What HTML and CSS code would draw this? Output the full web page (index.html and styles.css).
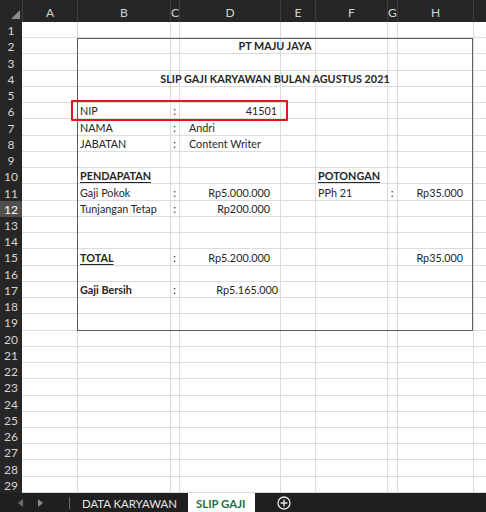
FILE: index.html
```html
<!DOCTYPE html>
<html lang="id">
<head>
<meta charset="utf-8">
<title>SLIP GAJI</title>
<link rel="stylesheet" href="styles.css">
</head>
<body>
<div class="app">
  <div class="colheads">
    <div class="corner"><span class="tri"></span></div>
    <div class="ch">A</div><div class="ch">B</div><div class="ch">C</div><div class="ch">D</div><div class="ch">E</div><div class="ch">F</div><div class="ch">G</div><div class="ch">H</div><div class="ch"></div>
  </div>
  <div class="main">
    <div class="rownums">
      <div>1</div><div>2</div><div>3</div><div>4</div><div>5</div><div>6</div><div>7</div><div>8</div><div>9</div><div>10</div>
      <div>11</div><div class="sel">12</div><div>13</div><div>14</div><div>15</div><div>16</div><div>17</div><div>18</div><div>19</div><div>20</div>
      <div>21</div><div>22</div><div>23</div><div>24</div><div>25</div><div>26</div><div>27</div><div>28</div><div>29</div>
    </div>
    <div class="cells">
      <div class="box"></div>
      <div class="cell title r2">PT MAJU JAYA</div>
      <div class="cell title r4">SLIP GAJI KARYAWAN BULAN AGUSTUS 2021</div>

      <div class="cell cb r6">NIP</div><div class="cell cc r6">:</div><div class="cell cd num-nip r6">41501</div>
      <div class="highlight"></div>
      <div class="cell cb r7">NAMA</div><div class="cell cc r7">:</div><div class="cell cd txt r7">Andri</div>
      <div class="cell cb r8">JABATAN</div><div class="cell cc r8">:</div><div class="cell cd txt r8">Content Writer</div>

      <div class="cell cb r10 head">PENDAPATAN</div><div class="cell cf r10 head">POTONGAN</div>
      <div class="cell cb r11">Gaji Pokok</div><div class="cell cc r11">:</div><div class="cell cd num r11">Rp5.000.000</div>
      <div class="cell cf r11">PPh 21</div><div class="cell cg r11">:</div><div class="cell ch2 num r11">Rp35.000</div>
      <div class="cell cb r12">Tunjangan Tetap</div><div class="cell cc r12">:</div><div class="cell cd num r12">Rp200.000</div>

      <div class="cell cb r15 head">TOTAL</div><div class="cell cc r15">:</div><div class="cell cd num r15">Rp5.200.000</div>
      <div class="cell ch2 num r15">Rp35.000</div>
      <div class="cell cb r17 strong">Gaji Bersih</div><div class="cell cc r17">:</div><div class="cell cd num-net r17">Rp5.165.000</div>
    </div>
  </div>
  <div class="tabbar">
    <div class="nav">
      <svg width="6" height="8" viewBox="0 0 6 8"><path d="M5 0 L0 4 L5 8 Z" fill="#6e6e6e"/></svg>
      <svg width="6" height="8" viewBox="0 0 6 8"><path d="M1 0 L6 4 L1 8 Z" fill="#8a8a8a"/></svg>
    </div>
    <div class="sep"></div>
    <div class="tab">DATA KARYAWAN</div>
    <div class="tab active">SLIP GAJI</div>
    <div class="add">
      <svg width="14" height="14" viewBox="0 0 14 14"><circle cx="7" cy="7" r="6" fill="none" stroke="#e6e6e6" stroke-width="1.3"/><path d="M7 3.6 V10.4 M3.6 7 H10.4" stroke="#e6e6e6" stroke-width="1.4"/></svg>
    </div>
  </div>
</div>
</body>
</html>
```
FILE: styles.css
```css
* { box-sizing: border-box; }
html, body { margin: 0; padding: 0; }
body {
  width: 486px;
  height: 512px;
  overflow: hidden;
  background: #ffffff;
  font-family: "Lato", "Open Sans", sans-serif;
}
.app {
  display: flex;
  flex-direction: column;
  height: 512px;
}
.colheads {
  display: grid;
  grid-template-columns: 22px 55px 93px 9px 101px 35px 72px 10px 76px 13px;
  height: 22px;
  background: #262626;
  color: #d4d4d4;
  font-size: 12px;
}
.corner {
  display: flex;
  align-items: flex-end;
  justify-content: flex-end;
  padding: 0 2px 3px 0;
}
.tri {
  width: 0;
  height: 0;
  border-style: solid;
  border-width: 0 0 9px 9px;
  border-color: transparent transparent #8c8c8c transparent;
}
.ch {
  display: flex;
  align-items: center;
  justify-content: center;
  border-left: 1px solid #3d3d3d;
  padding-top: 3px;
}
.main {
  display: flex;
  height: 471px;
}
.rownums {
  width: 22px;
  display: grid;
  grid-template-rows: repeat(29, 1fr);
  background: #262626;
  color: #d4d4d4;
  font-size: 12px;
}
.rownums div {
  display: flex;
  align-items: center;
  justify-content: center;
  padding-top: 1px;
}
.rownums .sel {
  background: #4f4f4f;
  color: #ffffff;
}
.cells {
  flex: 1;
  display: grid;
  grid-template-columns: 55px 93px 9px 101px 35px 72px 10px 76px 13px;
  grid-template-rows: repeat(29, 1fr);
  color: #262626;
  font-size: 10.8px;
  background-color: #ffffff;
  background-image:
    linear-gradient(#dcdcdc, #dcdcdc),
    linear-gradient(#dcdcdc, #dcdcdc),
    linear-gradient(#dcdcdc, #dcdcdc),
    linear-gradient(#dcdcdc, #dcdcdc),
    linear-gradient(#dcdcdc, #dcdcdc),
    linear-gradient(#dcdcdc, #dcdcdc),
    linear-gradient(#dcdcdc, #dcdcdc),
    linear-gradient(#dcdcdc, #dcdcdc),
    repeating-linear-gradient(to bottom, transparent 0, transparent 15.24px, #dcdcdc 15.24px, #dcdcdc 16.24px);
  background-size: 1px 100%, 1px 100%, 1px 100%, 1px 100%, 1px 100%, 1px 100%, 1px 100%, 1px 100%, 100% 100%;
  background-position: 55px 0, 148px 0, 157px 0, 258px 0, 293px 0, 365px 0, 375px 0, 451px 0, 0 0;
  background-repeat: no-repeat;
}
.box {
  grid-row: 2 / 20;
  grid-column: 2 / 9;
  border: 1px solid #5e5e5e;
}
.highlight {
  grid-row: 6;
  grid-column: 2 / 5;
  margin: -3px -8px -2px -6px;
  border: 2px solid #e8131b;
  border-radius: 1px;
  z-index: 2;
}
.cell {
  display: flex;
  align-items: flex-end;
  white-space: nowrap;
  line-height: 14px;
  padding-bottom: 1px;
  z-index: 1;
}
.title {
  grid-column: 2 / 9;
  justify-content: center;
  font-weight: 700;
}
.r2 { grid-row: 2; }
.r4 { grid-row: 4; }
.r6 { grid-row: 6; }
.r7 { grid-row: 7; }
.r8 { grid-row: 8; }
.r10 { grid-row: 10; }
.r11 { grid-row: 11; }
.r12 { grid-row: 12; }
.r15 { grid-row: 15; }
.r17 { grid-row: 17; }
.cb { grid-column: 2; padding-left: 3px; }
.cc { grid-column: 3; justify-content: center; }
.cd { grid-column: 4; }
.cf { grid-column: 6; padding-left: 3px; }
.cg { grid-column: 7; justify-content: center; }
.ch2 { grid-column: 8; }
.txt { padding-left: 10px; }
.num { justify-content: flex-end; padding-right: 10px; }
.num-nip { justify-content: flex-end; padding-right: 3px; }
.num-net { justify-content: flex-end; padding-right: 2px; }
.head { font-weight: 700; text-decoration: underline; text-underline-offset: 2px; }
.strong { font-weight: 700; }
.tabbar {
  flex: 1;
  display: flex;
  align-items: stretch;
  background: #1f1f1f;
  color: #e6e6e6;
  font-size: 11.4px;
}
.nav {
  display: flex;
  align-items: center;
  gap: 13px;
  padding-left: 18px;
  width: 69px;
}
.sep {
  width: 1px;
  margin: 4px 0 3px;
  background: #6a6a6a;
}
.tab {
  display: flex;
  align-items: center;
  padding: 1px 0 0 12px;
  width: 118px;
}
.tab.active {
  width: 67px;
  padding-left: 8px;
  background: #ffffff;
  color: #1e7145;
  font-weight: 700;
}
.add {
  display: flex;
  align-items: center;
  padding-left: 22px;
}
```
